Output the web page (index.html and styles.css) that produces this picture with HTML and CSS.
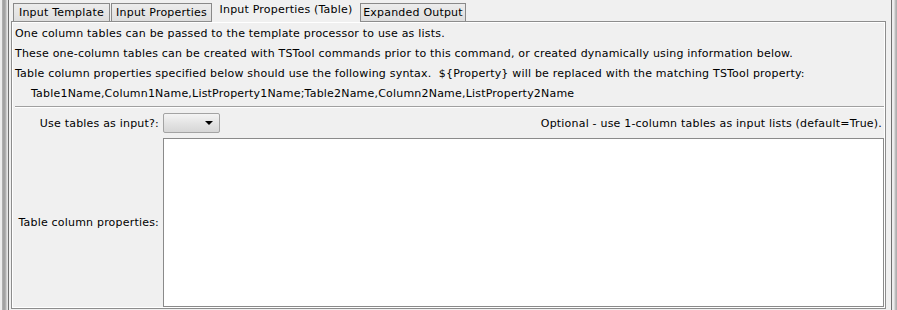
FILE: index.html
```html
<!DOCTYPE html>
<html lang="en">
<head>
    <meta charset="UTF-8">
    <title>Input Properties (Table)</title>
    <link rel="stylesheet" href="styles.css">
</head>
<body>
    <div class="edge-left"></div>

    <div class="frame">
        <!-- tabs -->
        <div class="tab-strip">
            <div class="tab tab-template">Input Template</div>
            <div class="tab tab-props">Input Properties</div>
            <div class="tab tab-table selected">Input Properties (Table)</div>
            <div class="tab tab-output">Expanded Output</div>
        </div>

        <div class="panel">
            <div class="info">
                <div class="info-line">One column tables can be passed to the template processor to use as lists.</div>
                <div class="info-line">These one-column tables can be created with TSTool commands prior to this command, or created dynamically using information below.</div>
                <div class="info-line">Table column properties specified below should use the following syntax.&nbsp; ${Property} will be replaced with the matching TSTool property:</div>
                <div class="info-line indent">Table1Name,Column1Name,ListProperty1Name;Table2Name,Column2Name,ListProperty2Name</div>
            </div>

            <div class="separator"></div>

            <div class="form">
                <label class="form-label">Use tables as input?:</label>
                <div class="combo">
                    <span class="combo-arrow"></span>
                </div>
                <div class="note">Optional - use 1-column tables as input lists (default=True).</div>

                <label class="form-label">Table column properties:</label>
                <textarea class="props-area"></textarea>
            </div>
        </div>
    </div>

    <div class="edge-right"></div>
</body>
</html>
```

FILE: styles.css
```css
html, body {
    margin: 0;
    padding: 0;
}
body {
    display: flex;
    width: 897px;
    height: 310px;
    overflow: hidden;
    background: #f0f0f0;
    font-family: "DejaVu Sans", Verdana, sans-serif;
    font-size: 11px;
    letter-spacing: 0.2px;
    color: #000;
}

/* window edges */
.edge-left {
    width: 8px;
    flex-shrink: 0;
    background: linear-gradient(to right, #ededed 0, #ededed 2px, #b4b4b4 2px, #9c9c9c 4px, #b8b8b8 6px, #e6e6e6 7px, #e6e6e6 8px);
}
.edge-right {
    width: 5px;
    flex-shrink: 0;
    background: linear-gradient(to right, #ececec 0, #ececec 2px, #c4c4c4 3px, #a8a8a8 5px);
}
.frame {
    flex: 1;
    display: flex;
    flex-direction: column;
    border-left: 1px solid #707070;
    border-right: 1px solid #707070;
    padding: 0 5px 0 2px;
}

/* tabs */
.tab-strip {
    display: flex;
    height: 21px;
    padding: 3px 0 0 2px;
    box-sizing: border-box;
    position: relative;
    z-index: 1;
}
.tab {
    box-sizing: border-box;
    height: 18px;
    line-height: 17px;
    text-align: center;
    border: 1px solid #898989;
    border-bottom: none;
    background: linear-gradient(#ececec, #dedede);
    white-space: nowrap;
}
.tab-template { width: 97px; margin-right: 1px; }
.tab-props { width: 101px; }
.tab-table { width: 148px; }
.tab-output { width: 106px; }
.tab.selected {
    border: none;
    background: #f0f0f0;
    height: 21px;
    margin-top: -2px;
    line-height: 18px;
}

/* tab body */
.panel {
    box-sizing: border-box;
    height: 288px;
    display: flex;
    flex-direction: column;
    border: 1px solid #8d8d8d;
    box-shadow: inset 1px 1px 0 #fff, inset -1px -1px 0 #fff;
    padding: 2px 1px 1px 3px;
}
.info-line {
    height: 20px;
    line-height: 20px;
    white-space: nowrap;
}
.info-line.indent {
    padding-left: 16px;
}
.separator {
    margin-top: 2px;
    border-top: 1px solid #a0a0a0;
    border-bottom: 1px solid #fff;
}

.form {
    flex: 1;
    display: grid;
    grid-template-columns: 148px auto 1fr;
    grid-template-rows: 20px 1fr;
    row-gap: 5px;
    margin-top: 5px;
}
.form-label {
    align-self: center;
    text-align: right;
    padding-right: 4px;
    white-space: nowrap;
}
.combo {
    box-sizing: border-box;
    width: 57px;
    height: 20px;
    border: 1px solid #a3a3a3;
    border-radius: 2px;
    background: linear-gradient(#f4f4f4, #e4e4e4 50%, #d6d6d6);
    position: relative;
}
.combo-arrow {
    position: absolute;
    right: 6px;
    top: 7px;
    width: 0;
    height: 0;
    border-left: 4px solid transparent;
    border-right: 4px solid transparent;
    border-top: 4px solid #000;
}
.note {
    align-self: center;
    text-align: right;
    padding-right: 2px;
    white-space: nowrap;
}
.props-area {
    grid-column: 2 / 4;
    box-sizing: border-box;
    width: 100%;
    height: 100%;
    margin: 0;
    resize: none;
    border: 1px solid #8a8a8a;
    background: #fff;
    font-family: inherit;
}
```
